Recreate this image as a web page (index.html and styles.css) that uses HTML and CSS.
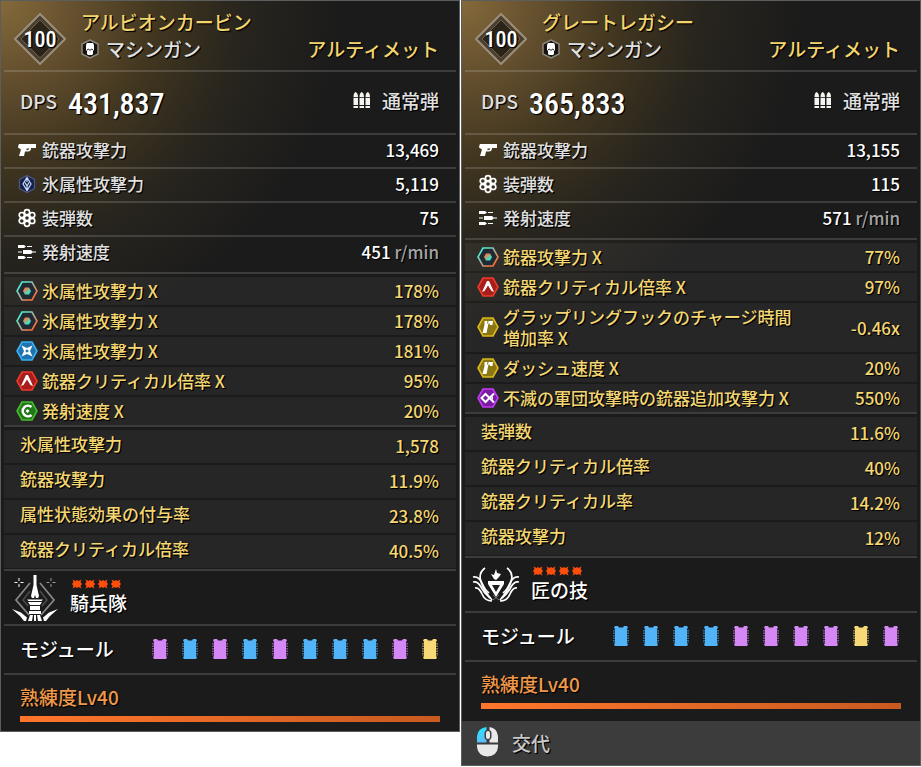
FILE: index.html
```
<!DOCTYPE html>
<html lang="ja">
<head>
  <meta charset="UTF-8" />
  <meta name="viewport" content="width=device-width, initial-scale=1.0"/>
  <title>武器比較</title>
  <link rel="stylesheet" href="styles.css">
</head>
<body>
  <!-- shared icons -->
  <svg class="sprite" aria-hidden="true">
    <defs>
      <linearGradient id="teal-orange" x1="0" y1="0" x2="1" y2="1">
        <stop offset="0.15" stop-color="#4df0d4"/>
        <stop offset="0.5" stop-color="#a9a996"/>
        <stop offset="0.85" stop-color="#ff6f3c"/>
      </linearGradient>
      <linearGradient id="orange-teal" x1="0" y1="0" x2="1" y2="1">
        <stop offset="0.2" stop-color="#ff7a45"/>
        <stop offset="0.75" stop-color="#35e6d0"/>
      </linearGradient>
      <linearGradient id="click" x1="0" y1="0" x2="0.3" y2="1">
        <stop offset="0" stop-color="#1fe9ff"/>
        <stop offset="1" stop-color="#5cc0fb"/>
      </linearGradient>
    </defs>
    <symbol id="i-level" viewBox="0 0 52 52">
      <path d="M26 1 51 26 26 51 1 26Z" fill="#4a3f2e" stroke="#9c8f7c" stroke-width="2"/>
      <path d="M26 7 45 26 26 45 7 26Z" fill="#2b2419" stroke="#6f614b" stroke-width="1"/>
    </symbol>
    <symbol id="i-skull" viewBox="0 0 18 20">
      <path d="M9 1 17 5V15L9 19 1 15V5Z" fill="#151412" stroke="#8d877b" stroke-width="1.5"/>
      <path d="M6 4H12L13 6V11L12 12V15L11 16H7L6 15V12L5 11V6Z" fill="#fff"/>
      <path d="M6 11 7.500 10 9 11.500 10.500 10 12 11" fill="none" stroke="#151412" stroke-width="1"/>
    </symbol>
    <symbol id="i-ammo" viewBox="0 0 18 17">
      <path d="M.5 5Q.5 1 2.500 0 5 1 5 5V13H.5ZM6.500 5Q6.500 1 8.700 0 11 1 11 5V13H6.500ZM12.500 5Q12.500 1 14.800 0 17 1 17 5V13H12.500ZM.5 14H5V16H.5ZM6.500 14H11V16H6.500ZM12.500 14H17V16H12.500Z" fill="#f4f4f0"/>
      <path d="M0 5.500H18" stroke="#1c1c1c" stroke-width=".8"/>
    </symbol>
    <symbol id="i-gun" viewBox="0 0 20 20">
      <path d="M2 4H19V8H14V9Q13.500 12 10 11.500H8L7 16H2L4 9.500 1 7.500 1.500 5Z" fill="#fff"/>
      <path d="M9.500 8.500H12.500Q12 10.500 9.500 10.300Z" fill="#45413a"/>
    </symbol>
    <symbol id="i-ice" viewBox="0 0 20 20">
      <path d="M10 1.500 17.500 5.500V14.500L10 18.500 2.500 14.500V5.500Z" fill="#182047" stroke="#4a5580" stroke-width="1.300"/>
      <path d="M10 3.500 14 10 10 16.500 6 10ZM10 4V8M10 16V12M8 8.500 10 12 12 8.500" fill="none" stroke="#c4dcff" stroke-width="1.200"/>
    </symbol>
    <symbol id="i-mag" viewBox="0 0 20 20">
      <g fill="none" stroke="#fff" stroke-width="1.700">
        <circle cx="10" cy="10" r="2.600"/><circle cx="10" cy="4.200" r="2.600"/><circle cx="10" cy="15.800" r="2.600"/>
        <circle cx="4.800" cy="7.100" r="2.600"/><circle cx="15.200" cy="7.100" r="2.600"/>
        <circle cx="4.800" cy="12.900" r="2.600"/><circle cx="15.200" cy="12.900" r="2.600"/>
      </g>
    </symbol>
    <symbol id="i-rate" viewBox="0 0 20 20">
      <path d="M1 3H7L9 4.500 7 6H1ZM10 4H15V5H10ZM6 8H14L15.500 9.500H19V10.500H15.500L14 12H6ZM1 9.500H5V10.500H1ZM1 14H7L9 15.500 7 17H1ZM10 15H15V16H10Z" fill="#fff"/>
    </symbol>
    <symbol id="i-core" viewBox="0 0 22 20">
      <path d="M6 1H16L21 10 16 19H6L1 10Z" fill="#1f2a33" stroke="url(#teal-orange)" stroke-width="1.600"/>
      <path d="M9 6.500H13L15 10 13 13.500H9L7 10Z" fill="url(#orange-teal)"/>
    </symbol>
    <symbol id="i-tech" viewBox="0 0 22 20">
      <path d="M6 1H16L21 10 16 19H6L1 10Z" fill="#1f74b0" stroke="#3ab0f5" stroke-width="1.600"/>
      <path d="M5.500 4.500 11 7 16.500 4.500 14 10 16.500 15.500 11 13 5.500 15.500 8 10Z" fill="#fff"/>
      <path d="M11 8.200 12.800 10 11 11.800 9.200 10Z" fill="#1f74b0"/>
    </symbol>
    <symbol id="i-attack" viewBox="0 0 22 20">
      <path d="M6 1H16L21 10 16 19H6L1 10Z" fill="#a81e1a" stroke="#ee3a2b" stroke-width="1.600"/>
      <path d="M10 4H12L17 15 14.500 14 11 8.500 7.500 14 5 15Z" fill="#fff"/>
    </symbol>
    <symbol id="i-fire" viewBox="0 0 22 20">
      <path d="M6 1H16L21 10 16 19H6L1 10Z" fill="#23761a" stroke="#46bd2e" stroke-width="1.600"/>
      <path d="M15.500 6A5.300 5.300 0 1 0 15.500 14" fill="none" stroke="#fff" stroke-width="2.600"/>
      <path d="M11.500 8 13.500 10 11.500 12 9.500 10Z" fill="#fff"/>
    </symbol>
    <symbol id="i-utility" viewBox="0 0 22 20">
      <path d="M6 1H16L21 10 16 19H6L1 10Z" fill="#8a7713" stroke="#dcb91d" stroke-width="1.600"/>
      <path d="M7.500 4H16L15.500 8H13L12.500 6.500H11.500L9.500 16H5.500L7.500 8Z" fill="#fff"/>
      <path d="M11 4 10.500 6.500" stroke="#8a7713" stroke-width="1"/>
    </symbol>
    <symbol id="i-special" viewBox="0 0 22 20">
      <path d="M6 1H16L21 10 16 19H6L1 10Z" fill="#7b1aa3" stroke="#c43df2" stroke-width="1.600"/>
      <path d="M17 5.500 12.500 10 8.500 14 4.500 10 8.500 6 12.500 10 17 14.500" fill="none" stroke="#fff" stroke-width="2"/>
      <path d="M14 10 16 8V12Z" fill="#fff"/>
    </symbol>
    <symbol id="i-star" viewBox="0 0 10 10">
      <path d="M.5 .5 3.500 2 5 1 6.500 2 9.500 .5 8.500 3 10 5 8.500 7 9.500 9.500 6.500 8 5 9 3.500 8 .5 9.500 1.500 7 0 5 1.500 3Z" fill="#ff4e0c"/>
    </symbol>
    <symbol id="i-module" viewBox="0 0 16 20">
      <path d="M2 0H5L6 1.500H10L11 0H14L15 1.500 14 3V17L15 18.500 14 20H2L1 18.500 2 17V3L1 1.500Z" fill="currentColor"/>
      <path d="M1 4V17M15 4V17" fill="none" stroke="currentColor" stroke-width="1" stroke-dasharray="1.500 1"/>
    </symbol>
    <symbol id="i-cavalry" viewBox="0 0 46 46">
      <path d="M18 8 4 25 17 40M28 8 42 25 29 40" fill="none" stroke="#858585" stroke-width="1.800"/>
      <path d="M18 16 11 25 16 31M28 16 35 25 30 31" fill="none" stroke="#4d4d4d" stroke-width="1.500"/>
      <path d="M7 3V6M7 9V12M2.500 7.500H5.500M8.500 7.500H11.500" stroke="#fff" stroke-width="1"/>
      <path d="M39 3V6M39 9V12M34.500 7.500H37.500M40.500 7.500H43.500" stroke="#999" stroke-width="1"/>
      <path d="M21.500 0H24.500V10L27 21 26 23H24L23 20 22 23H20L19 21 21.500 10Z" fill="#fff"/>
      <path d="M15 24.500H31L29.500 26H16.500ZM16 27H30L28 30H18ZM18 31H28V35H18ZM17 36H29V39H17ZM18 40H21L20 46H16ZM22 40H24V46H22ZM25 40H28L30 46H26Z" fill="#fff"/>
      <path d="M0 34 9 37.500 15 42.500 14 46H12L8 41ZM46 34 37 37.500 31 42.500 32 46H34L38 41Z" fill="#fff"/>
    </symbol>
    <symbol id="i-artisan" viewBox="0 0 48 36">
      <g fill="none" stroke="#fff" stroke-width="1.700">
        <path d="M13 1Q6 6 9 15T20 33M35 1Q42 6 39 15T28 33"/>
        <path d="M1 10Q7 9 10 16T17 26M47 10Q41 9 38 16T31 26"/>
        <path d="M1 15Q6 14 9 20T18 31M47 15Q42 14 39 20T30 31"/>
        <path d="M3 21Q7 20 10 27T20 34M45 21Q41 20 38 27T28 34"/>
      </g>
      <path d="M16 14H32V17L24 30 16 17ZM20 18 24 25 28 18Z" fill="#fff" fill-rule="evenodd"/>
      <path d="M22 12 19 7 22 8 24 2 25 6 29 7 27 10 24 13Z" fill="#fff"/>
      <path d="M21 28 27 33M27 28 21 33" stroke="#777" stroke-width="1"/>
    </symbol>
    <symbol id="i-mouse" viewBox="0 0 22 30">
      <path d="M9.500 0V3Q7.500 4 7.500 6V10Q7.500 12 9.500 13V15.500H0V9Q1 1 9.500 0Z" fill="url(#click)"/>
      <path d="M12.500 0V3Q14.500 4 14.500 6V10Q14.500 12 12.500 13V15.500H21V9Q20 1 12.500 0Z" fill="#e9e9e9"/>
      <rect x="9" y="4" width="4" height="8" rx="2" fill="#e9e9e9"/>
      <path d="M0 17.500H21V20Q20 29 10.500 29.500 1 29 0 20Z" fill="#e9e9e9"/>
    </symbol>
  </svg>

  <main class="compare">
    <article class="card">
      <header class="card-head">
        <div class="level"><svg><use href="#i-level"/></svg><span>100</span></div>
        <div class="names">
          <h2>アルビオンカービン</h2>
          <p><svg class="type-icon"><use href="#i-skull"/></svg>マシンガン</p>
        </div>
        <span class="tier">アルティメット</span>
      </header>
      <div class="dps">
        <span>DPS</span>
        <strong>431,837</strong>
        <span class="ammo"><svg><use href="#i-ammo"/></svg>通常弾</span>
      </div>
      <dl class="base">
        <div><dt><svg><use href="#i-gun"/></svg>銃器攻撃力</dt><dd>13,469</dd></div>
        <div><dt><svg><use href="#i-ice"/></svg>氷属性攻撃力</dt><dd>5,119</dd></div>
        <div><dt><svg><use href="#i-mag"/></svg>装弾数</dt><dd>75</dd></div>
        <div><dt><svg><use href="#i-rate"/></svg>発射速度</dt><dd>451 <small>r/min</small></dd></div>
      </dl>
      <dl class="perks">
        <div><dt><svg><use href="#i-core"/></svg>氷属性攻撃力 X</dt><dd>178%</dd></div>
        <div><dt><svg><use href="#i-core"/></svg>氷属性攻撃力 X</dt><dd>178%</dd></div>
        <div><dt><svg><use href="#i-tech"/></svg>氷属性攻撃力 X</dt><dd>181%</dd></div>
        <div><dt><svg><use href="#i-attack"/></svg>銃器クリティカル倍率 X</dt><dd>95%</dd></div>
        <div><dt><svg><use href="#i-fire"/></svg>発射速度 X</dt><dd>20%</dd></div>
      </dl>
      <dl class="options">
        <div><dt>氷属性攻撃力</dt><dd>1,578</dd></div>
        <div><dt>銃器攻撃力</dt><dd>11.9%</dd></div>
        <div><dt>属性状態効果の付与率</dt><dd>23.8%</dd></div>
        <div><dt>銃器クリティカル倍率</dt><dd>40.5%</dd></div>
      </dl>
      <div class="set">
        <svg class="emblem"><use href="#i-cavalry"/></svg>
        <div>
          <div class="stars">
            <svg><use href="#i-star"/></svg><svg><use href="#i-star"/></svg><svg><use href="#i-star"/></svg><svg><use href="#i-star"/></svg>
          </div>
          <p>騎兵隊</p>
        </div>
      </div>
      <div class="modules">
        <span>モジュール</span>
        <div class="slots">
          <svg class="purple"><use href="#i-module"/></svg>
          <svg class="blue"><use href="#i-module"/></svg>
          <svg class="purple"><use href="#i-module"/></svg>
          <svg class="blue"><use href="#i-module"/></svg>
          <svg class="purple"><use href="#i-module"/></svg>
          <svg class="blue"><use href="#i-module"/></svg>
          <svg class="blue"><use href="#i-module"/></svg>
          <svg class="blue"><use href="#i-module"/></svg>
          <svg class="purple"><use href="#i-module"/></svg>
          <svg class="gold"><use href="#i-module"/></svg>
        </div>
      </div>
      <div class="mastery">
        <p>熟練度Lv40</p>
        <div class="bar"></div>
      </div>
    </article>

    <article class="card">
      <header class="card-head">
        <div class="level"><svg><use href="#i-level"/></svg><span>100</span></div>
        <div class="names">
          <h2>グレートレガシー</h2>
          <p><svg class="type-icon"><use href="#i-skull"/></svg>マシンガン</p>
        </div>
        <span class="tier">アルティメット</span>
      </header>
      <div class="dps">
        <span>DPS</span>
        <strong>365,833</strong>
        <span class="ammo"><svg><use href="#i-ammo"/></svg>通常弾</span>
      </div>
      <dl class="base">
        <div><dt><svg><use href="#i-gun"/></svg>銃器攻撃力</dt><dd>13,155</dd></div>
        <div><dt><svg><use href="#i-mag"/></svg>装弾数</dt><dd>115</dd></div>
        <div><dt><svg><use href="#i-rate"/></svg>発射速度</dt><dd>571 <small>r/min</small></dd></div>
      </dl>
      <dl class="perks">
        <div><dt><svg><use href="#i-core"/></svg>銃器攻撃力 X</dt><dd>77%</dd></div>
        <div><dt><svg><use href="#i-attack"/></svg>銃器クリティカル倍率 X</dt><dd>97%</dd></div>
        <div><dt><svg><use href="#i-utility"/></svg>グラップリングフックのチャージ時間増加率 X</dt><dd>-0.46x</dd></div>
        <div><dt><svg><use href="#i-utility"/></svg>ダッシュ速度 X</dt><dd>20%</dd></div>
        <div><dt><svg><use href="#i-special"/></svg>不滅の軍団攻撃時の銃器追加攻撃力 X</dt><dd>550%</dd></div>
      </dl>
      <dl class="options">
        <div><dt>装弾数</dt><dd>11.6%</dd></div>
        <div><dt>銃器クリティカル倍率</dt><dd>40%</dd></div>
        <div><dt>銃器クリティカル率</dt><dd>14.2%</dd></div>
        <div><dt>銃器攻撃力</dt><dd>12%</dd></div>
      </dl>
      <div class="set">
        <svg class="emblem"><use href="#i-artisan"/></svg>
        <div>
          <div class="stars">
            <svg><use href="#i-star"/></svg><svg><use href="#i-star"/></svg><svg><use href="#i-star"/></svg><svg><use href="#i-star"/></svg>
          </div>
          <p>匠の技</p>
        </div>
      </div>
      <div class="modules">
        <span>モジュール</span>
        <div class="slots">
          <svg class="blue"><use href="#i-module"/></svg>
          <svg class="blue"><use href="#i-module"/></svg>
          <svg class="blue"><use href="#i-module"/></svg>
          <svg class="blue"><use href="#i-module"/></svg>
          <svg class="purple"><use href="#i-module"/></svg>
          <svg class="purple"><use href="#i-module"/></svg>
          <svg class="purple"><use href="#i-module"/></svg>
          <svg class="purple"><use href="#i-module"/></svg>
          <svg class="gold"><use href="#i-module"/></svg>
          <svg class="purple"><use href="#i-module"/></svg>
        </div>
      </div>
      <div class="mastery">
        <p>熟練度Lv40</p>
        <div class="bar"></div>
      </div>
      <button type="button" class="swap"><svg><use href="#i-mouse"/></svg>交代</button>
    </article>
  </main>
</body>
</html>
```
FILE: styles.css
```
* {
  box-sizing: border-box;
}
body {
  font-family: "Noto Sans CJK JP", sans-serif;
  font-weight: 500;
  margin: 0;
  background: #fff;
  color: #e0e0e0;
  font-size: 17px;
}
h2, p, dl, dd {
  margin: 0;
  font-weight: 500;
}
svg {
  display: block;
  flex: none;
}
.sprite {
  position: absolute;
  width: 0;
  height: 0;
}

.compare {
  display: grid;
  grid-template-columns: 1fr 1fr;
  gap: 1px;
  align-items: start;
}
.card {
  border: 1px solid #5c5e5e;
  background: radial-gradient(circle at top left, #84693a 0, #5e4b2c 90px, #40351f 160px, #28251e 240px, #1b1b1b 340px);
  text-shadow: 1px 1px 1px #000, 1px 1px 0 #000;
}
.card > * {
  margin: 0 3px;
  border-bottom: 2px solid rgba(255,255,255,0.15);
}

/* title and level */
.card-head {
  display: flex;
  padding: 7px 17px 8px 10px;
  font-size: 19px;
  line-height: 27px;
}
.level {
  display: grid;
  place-items: center;
  width: 52px;
  height: 54px;
  padding-top: 5px;
}
.level svg, .level span {
  grid-area: 1 / 1;
}
.level svg {
  width: 52px;
  height: 52px;
}
.level span, .dps strong {
  font-family: "Roboto Condensed", Roboto, sans-serif;
  font-weight: 500;
  color: #fff;
}
.level span {
  font-size: 22px;
}
.names {
  flex: 1;
  padding-left: 15px;
}
.names h2 {
  font-size: 19px;
}
.names h2, .tier {
  color: #f4d56d;
}
.names p {
  display: flex;
  align-items: center;
  gap: 7px;
}
.type-icon {
  width: 18px;
  height: 20px;
}
.tier {
  align-self: flex-end;
}

.dps {
  display: flex;
  align-items: center;
  height: 63px;
  padding: 0 17px 0 16px;
  font-size: 19px;
}
.dps > span {
  padding-bottom: 4px;
}
.dps strong {
  padding: 2px 0 0 11px;
  font-size: 30px;
}
.ammo {
  display: flex;
  align-items: center;
  gap: 11px;
  margin-left: auto;
}
.ammo svg {
  width: 18px;
  height: 17px;
}

/* stat rows */
dl > div {
  display: flex;
  align-items: center;
  justify-content: space-between;
  padding: 0 17px 0 12px;
}
dt {
  display: flex;
  align-items: center;
  gap: 4px;
}
dd {
  font-size: 17px;
  white-space: nowrap;
}
.base svg, .perks svg {
  width: 22px;
  height: 20px;
}
.base > div {
  height: 34px;
  padding-bottom: 3px;
  border-bottom: 2px solid rgba(255,255,255,0.15);
}
.base > div:last-child {
  height: 35px;
  padding-bottom: 6px;
  border-bottom: none;
}
.base dd {
  color: #fff;
}
.base small {
  font-size: 17px;
  color: #a5a5a5;
}
.perks, .options {
  display: grid;
  gap: 2px;
  padding-top: 3px;
  color: #f4d772;
}
.perks > div, .options > div {
  background: rgba(255,255,255,0.05);
}
.perks > div {
  padding-top: 3px;
  padding-bottom: 4px;
}
.perks dt {
  max-width: 324px;
  line-height: 21px;
}
.perks dd {
  line-height: 21px;
}
.options {
  padding-bottom: 1px;
}
.options > div {
  height: 33px;
  padding-left: 16px;
}
.options dt {
  padding-bottom: 6px;
}
.options dd {
  padding-bottom: 2px;
}

/* gear set */
.set {
  display: flex;
  align-items: center;
  height: 55px;
  padding-left: 7px;
  gap: 11px;
  color: #fff;
  font-size: 19px;
}
.emblem {
  width: 48px;
  height: 46px;
}
.set p {
  line-height: 26px;
}
.stars {
  display: flex;
  gap: 3px;
  padding: 0 2px 1px;
}
.stars svg {
  width: 10px;
  height: 10px;
}

.modules {
  display: flex;
  align-items: center;
  justify-content: space-between;
  height: 49px;
  padding: 0 18px 2px 16px;
  color: #fff;
  font-size: 19px;
}
.slots {
  display: flex;
  gap: 14px;
}
.slots svg {
  width: 16px;
  height: 20px;
}
.blue {
  color: #52b4f8;
}
.purple {
  color: #d487f5;
}
.gold {
  color: #f8d978;
}

.mastery {
  padding: 8px 16px 9px;
  border-bottom: none;
  color: #f0994a;
  font-size: 19px;
}
.mastery p {
  padding-bottom: 5px;
  line-height: 28px;
}
.bar {
  height: 6px;
  background: linear-gradient(90deg, #ff762b, #c95a20);
}

.swap {
  display: flex;
  align-items: center;
  gap: 13px;
  width: 100%;
  height: 44px;
  margin: 3px 0 0;
  padding: 0 15px 2px;
  border: none;
  background: #3c3c3c;
  color: #c9c9c9;
  font: inherit;
  font-size: 19px;
  text-shadow: inherit;
}
.swap svg {
  width: 22px;
  height: 30px;
}
```
